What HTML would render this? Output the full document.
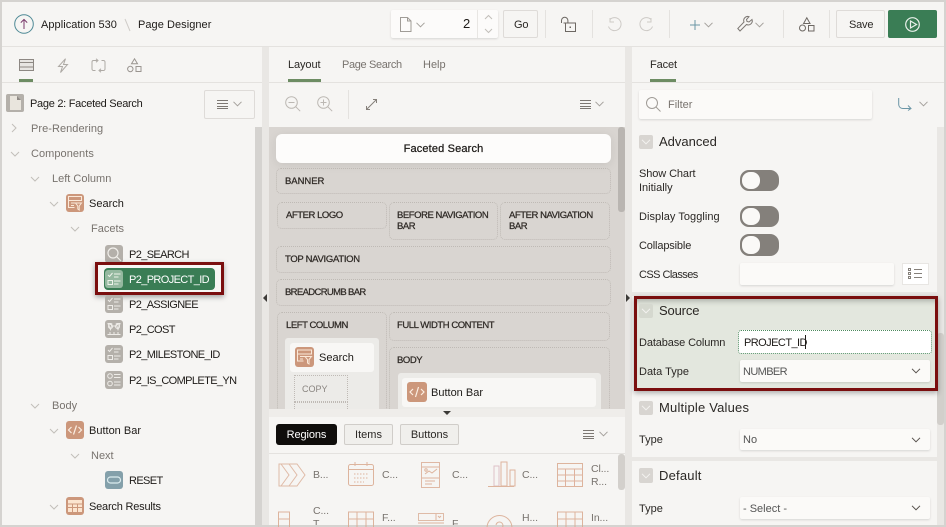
<!DOCTYPE html>
<html><head><meta charset="utf-8"><style>
html,body{margin:0;padding:0;background:#d5d3d0}
#p{position:relative;width:946px;height:527px;overflow:hidden;background:#d5d3d0;font-family:"Liberation Sans",sans-serif;font-size:11px;color:#2b2825}
#p div,#p span,#p svg{position:absolute;display:block}
.t{white-space:nowrap;line-height:14px;height:14px;margin-top:1px}
.g{color:#78736e}
.b{color:#1e1b18}
.u{letter-spacing:-.62px}
.r{font-size:9.5px;color:#2f2a26;-webkit-text-stroke:.25px #2f2a26;line-height:12px;white-space:pre;margin-top:1px;letter-spacing:-.45px}
.z{border:1px dotted #bfbab5;border-radius:5px;box-sizing:border-box}
.ib{background:#b4b0aa;border-radius:3px;width:18px;height:18px;left:105px}
.or{background:#cc977b;border-radius:3px}
.sel{background:#fbfaf8;border-radius:2px;box-shadow:0 1px 2px rgba(0,0,0,.13)}
.tg{left:740px;width:39px;height:21px;background:#84807b;border-radius:9px}
.tg i{position:absolute;display:block;left:2px;top:2px;width:18px;height:17px;border-radius:8px;background:#faf9f7}
.ck{left:639px;width:14px;height:14px;background:#d8d5d1;border-radius:2px}
.h{font-size:13px;color:#2b2825}
.f{font-size:10.5px;letter-spacing:-.1px}
svg{overflow:visible}
.s{fill:none;stroke:#a5a19c;stroke-width:1}
</style></head><body><div id="p">

<!-- base panels -->
<div style="left:2px;top:2px;width:942px;height:44px;background:#f6f5f3"></div>
<div style="left:2px;top:46px;width:942px;height:1px;background:#e4e2df"></div>
<div style="left:2px;top:47px;width:942px;height:478px;background:#e9e7e4"></div>
<div style="left:2px;top:47px;width:253px;height:478px;background:#f6f5f3"></div>
<div style="left:255px;top:47px;width:7px;height:80px;background:#f6f5f3"></div>
<div style="left:255px;top:127px;width:7px;height:398px;background:#d5d3d0"></div>
<div style="left:2px;top:82px;width:260px;height:1px;background:#e4e2df"></div>
<div style="left:269px;top:47px;width:356px;height:80px;background:#f6f5f3"></div>
<div style="left:269px;top:82px;width:356px;height:1px;background:#e4e2df"></div>
<div style="left:632px;top:47px;width:312px;height:80px;background:#f6f5f3"></div>
<div style="left:632px;top:82px;width:312px;height:1px;background:#e4e2df"></div>

<!-- header -->
<svg style="left:14px;top:14px" width="20" height="20"><circle cx="10" cy="10" r="9.3" fill="none" stroke="#4f8a96" stroke-width="1"/><path d="M10 15V5.500M6.800 8.600L10 5.400l3.200 3.200" fill="none" stroke="#7a3a6b" stroke-width="1"/></svg>
<span class="t b" style="left:41px;top:17px;letter-spacing:.05px">Application 530</span>
<svg style="left:124px;top:18px" width="8" height="14"><path d="M1 1l5 12" stroke="#cfccc8" fill="none"/></svg>
<span class="t b" style="left:138px;top:17px;letter-spacing:.05px">Page Designer</span>

<!-- toolbar -->
<div class="sel" style="left:391px;top:10px;width:107px;height:28px;background:#fcfbfa"></div>
<svg style="left:400px;top:17px" width="12" height="15"><path d="M.5.500h7l3.500 3.500v10.500H.5z M7.500.500v3.500h3.500" fill="none" stroke="#a09c97"/></svg>
<svg style="left:416px;top:22px" width="9" height="6"><path d="M.5.800l4 4 4-4" class="s"/></svg>
<span class="t b" style="left:463px;top:16px;font-size:13px">2</span>
<div style="left:477px;top:10px;width:1px;height:28px;background:#e8e6e3"></div>
<svg style="left:484px;top:14px" width="9" height="20"><path d="M1 5l3.500-3.500L8 5M1 15l3.500 3.500L8 15" fill="none" stroke="#c2bfba"/></svg>
<div style="left:503px;top:10px;width:35px;height:28px;box-sizing:border-box;border:1px solid #dedbd8;border-radius:2px"></div>
<span class="t" style="left:514px;top:17px;letter-spacing:-.2px">Go</span>
<div style="left:545px;top:10px;width:1px;height:28px;background:#e4e2df"></div>
<svg style="left:560px;top:16px" width="17" height="16"><path d="M1.500 7V4.500a3.200 3.200 0 0 1 6.400 0V7M3.500 7h12v8.500h-10V7" fill="none" stroke="#6d6863"/><rect x="9.500" y="10.500" width="1.500" height="1.500" fill="#6d6863"/></svg>
<div style="left:592px;top:10px;width:1px;height:28px;background:#e4e2df"></div>
<svg style="left:607px;top:17px" width="15" height="15"><path d="M3 2.500a6.500 6.500 0 1 1-1.500 7M3 1v4h4" fill="none" stroke="#cdcac6"/></svg>
<svg style="left:639px;top:17px" width="15" height="15"><path d="M12 2.500a6.500 6.500 0 1 0 1.500 7M12 1v4H8" fill="none" stroke="#cdcac6"/></svg>
<div style="left:669px;top:10px;width:1px;height:28px;background:#e4e2df"></div>
<svg style="left:690px;top:20px" width="10" height="10"><path d="M5 0v10M0 5h10" stroke="#6b96a6" fill="none"/></svg>
<svg style="left:704px;top:22px" width="9" height="6"><path d="M.5.800l4 4 4-4" class="s"/></svg>
<svg style="left:737px;top:16px" width="16" height="16"><path d="M15 3.500l-3 2.500-2-.5-.5-2L12 .7A4 4 0 0 0 7 6L.8 12.500 3 15l6.500-6.500A4 4 0 0 0 15 3.500z" fill="none" stroke="#7d7873"/></svg>
<svg style="left:755px;top:22px" width="9" height="6"><path d="M.5.800l4 4 4-4" class="s"/></svg>
<div style="left:783px;top:10px;width:1px;height:28px;background:#e4e2df"></div>
<svg style="left:799px;top:17px" width="16" height="15"><path d="M7.800.8l3.200 5.700H4.600z" fill="none" stroke="#6d6863"/><circle cx="3.500" cy="11" r="3" fill="none" stroke="#6d6863"/><rect x="9.500" y="8.500" width="5.500" height="5.500" fill="none" stroke="#6d6863"/></svg>
<div style="left:829px;top:10px;width:1px;height:28px;background:#e4e2df"></div>
<div style="left:836px;top:10px;width:49px;height:28px;box-sizing:border-box;border:1px solid #dedbd8;border-radius:2px"></div>
<span class="t" style="left:849px;top:17px;letter-spacing:-.2px">Save</span>
<div style="left:888px;top:10px;width:49px;height:28px;background:#3a7d55;border-radius:2px"></div>
<svg style="left:905px;top:17px" width="15" height="15"><circle cx="7.500" cy="7.500" r="6.800" fill="none" stroke="#e8f0ea" stroke-width="1.200"/><path d="M5.500 4l6 3.500-6 3.500z" fill="none" stroke="#e8f0ea" stroke-width="1.200"/></svg>

<!-- left tabs -->
<svg style="left:19px;top:59px" width="15" height="13"><rect x=".5" y=".5" width="14" height="11" fill="#e7e5e2" stroke="#8d8883"/><path d="M1 3.500h13M1 8h13" stroke="#8d8883"/></svg>
<div style="left:19px;top:79px;width:14px;height:3px;background:#6d8c63"></div>
<svg style="left:57px;top:58px" width="12" height="15"><path d="M8.500.7L1.500 8.500h4L3.500 14.500l7-8h-4z" fill="none" stroke="#aeaaa5"/></svg>
<svg style="left:91px;top:58px" width="15" height="15"><path d="M6 2.500H2.500a1.500 1.500 0 0 0-1.500 1.500v7a1.500 1.500 0 0 0 1.500 1.500h2M9 12.500h3.500a1.500 1.500 0 0 0 1.500-1.500V4a1.500 1.500 0 0 0-1.500-1.500h-2M5 .7l2 1.800-2 1.800M10 10.700l-2 1.800 2 1.800" fill="none" stroke="#aeaaa5"/></svg>
<svg style="left:127px;top:58px" width="15" height="15"><path d="M7.500.8l3 5H4.500z" fill="none" stroke="#9a9590"/><circle cx="3.300" cy="11" r="2.700" fill="none" stroke="#9a9590"/><rect x="9" y="8.500" width="5" height="5" fill="none" stroke="#9a9590"/></svg>

<!-- middle tabs -->
<span class="t" style="left:288px;top:57px;letter-spacing:-.1px">Layout</span>
<div style="left:288px;top:79px;width:33px;height:3px;background:#6d8c63"></div>
<span class="t g" style="left:342px;top:57px;letter-spacing:-.35px">Page Search</span>
<span class="t g" style="left:423px;top:57px">Help</span>

<!-- right tab -->
<span class="t" style="left:650px;top:57px;letter-spacing:-.1px">Facet</span>
<div style="left:650px;top:79px;width:26px;height:3px;background:#6d8c63"></div>

<!-- tree head -->
<div style="left:6px;top:94px;width:18px;height:18px;background:#b4b0aa;border-radius:2px"></div>
<svg style="left:10px;top:96px" width="11" height="14"><path d="M0 0h7l4 4v10H0z" fill="#e9e5dd"/><path d="M7 0l4 4H7z" fill="#8f8a85"/></svg>
<span class="t b" style="left:30px;top:96px;letter-spacing:-.28px">Page 2: Faceted Search</span>
<div style="left:204px;top:90px;width:51px;height:29px;box-sizing:border-box;border:1px solid #dedbd8;border-radius:2px"></div>
<svg style="left:217px;top:100px" width="11" height="9"><path d="M0 .5h11M0 3.500h11M0 6.500h11M0 8.500h11" stroke="#7d7873"/></svg>
<svg style="left:233px;top:101px" width="9" height="6"><path d="M.5.800l4 4 4-4" class="s"/></svg>

<!-- tree chevrons -->
<svg style="left:0;top:0" width="110" height="527"><g fill="none" stroke="#c2beb9">
<path d="M12 124l4 4-4 4"/>
<path d="M11 152l4 4 4-4"/>
<path d="M31 177l4 4 4-4"/>
<path d="M50 202l4 4 4-4"/>
<path d="M71 227l4 4 4-4"/>
<path d="M31 404l4 4 4-4"/>
<path d="M50 429l4 4 4-4"/>
<path d="M71 454l4 4 4-4"/>
<path d="M50 505l4 4 4-4"/>
</g></svg>

<!-- tree text -->
<span class="t g" style="left:31px;top:121px;letter-spacing:.05px">Pre-Rendering</span>
<span class="t g" style="left:31px;top:146px;letter-spacing:.05px">Components</span>
<span class="t g" style="left:52px;top:171px;letter-spacing:0">Left Column</span>
<div class="or" style="left:66px;top:194px;width:18px;height:18px"></div>
<svg style="left:66px;top:194px" width="18" height="18"><g fill="none" stroke="#fae8d8"><path d="M2.500 2.500h13v4h-13zM2.500 2.500v11h6M5 9h5M5 11.500h3"/><path d="M9.500 9h6l-2.300 3v4l-1.400-1v-3z"/></g></svg>
<span class="t b" style="left:89px;top:196px">Search</span>
<span class="t g" style="left:91px;top:221px">Facets</span>

<div class="ib" style="top:245px"></div>
<svg style="left:105px;top:245px" width="18" height="18"><circle cx="8" cy="8" r="5" fill="none" stroke="#f1efeb" stroke-width="1.200"/><path d="M11.500 11.500l4.500 4.500" stroke="#f1efeb" stroke-width="1.200"/></svg>
<span class="t b u" style="left:129px;top:247px">P2_SEARCH</span>

<!-- highlight -->
<div style="left:95px;top:262px;width:129px;height:33px;box-sizing:border-box;border:3px solid #7a0e0e;box-shadow:0 2px 5px rgba(0,0,0,.35);background:#f6f5f3"></div>
<div style="left:104px;top:268px;width:111px;height:22px;background:#3a7d55;border-radius:4px"></div>
<div style="left:105px;top:270px;width:18px;height:18px;background:#94b89f;border-radius:3px"></div>
<svg style="left:105px;top:270px" width="18" height="18"><g fill="none" stroke="#eef3ea"><path d="M3 5l1.500 1.500L7.500 3M9 4h6.500M9 7h4.500"/><rect x="3" y="10.500" width="4.500" height="4"/><path d="M9 11h6.500M9 14h4.500"/></g></svg>
<span class="t u" style="left:129px;top:272px;color:#fff">P2_PROJECT_ID</span>

<div class="ib" style="top:295px"></div>
<svg style="left:105px;top:295px" width="18" height="18"><g fill="none" stroke="#eeece8"><path d="M3 5l1.500 1.500L7.500 3M9 4h6.500M9 7h4.500"/><rect x="3" y="10.500" width="4.500" height="4"/><path d="M9 11h6.500M9 14h4.500"/></g></svg>
<span class="t b u" style="left:129px;top:297px">P2_ASSIGNEE</span>

<div class="ib" style="top:320px"></div>
<svg style="left:105px;top:320px" width="18" height="18"><g fill="none" stroke="#eeece8"><path d="M2.500 3.500h4M11.500 3.500h4M3 3.500l2.500 6 1.500-6M11 3.500l2 6 2-6"/><circle cx="5.500" cy="6.500" r="2"/><circle cx="12.500" cy="6.500" r="2"/><path d="M7 6h4M2.500 14.500h13M5 12v2.500M9 12v2.500M13 12v2.500"/></g></svg>
<span class="t b u" style="left:129px;top:322px">P2_COST</span>

<div class="ib" style="top:345px"></div>
<svg style="left:105px;top:345px" width="18" height="18"><g fill="none" stroke="#eeece8"><path d="M3 5l1.500 1.500L7.500 3M9 4h6.500M9 7h4.500"/><rect x="3" y="10.500" width="4.500" height="4"/><path d="M9 11h6.500M9 14h4.500"/></g></svg>
<span class="t b u" style="left:129px;top:347px">P2_MILESTONE_ID</span>

<div class="ib" style="top:371px"></div>
<svg style="left:105px;top:371px" width="18" height="18"><g fill="none" stroke="#eeece8"><circle cx="5" cy="5" r="2.300"/><circle cx="5" cy="12.500" r="2.300"/><path d="M9 3.500h6.500M9 6.500h6.500M9 11h6.500M9 14h6.500"/></g></svg>
<span class="t b u" style="left:129px;top:373px">P2_IS_COMPLETE_YN</span>

<span class="t g" style="left:52px;top:398px">Body</span>
<div class="or" style="left:66px;top:421px;width:18px;height:18px"></div>
<svg style="left:66px;top:421px" width="18" height="18"><path d="M5.500 6l-3 3 3 3M12.500 6l3 3-3 3M10.500 4.500l-3 9" fill="none" stroke="#fbeee2" stroke-width="1.200"/></svg>
<span class="t b" style="left:89px;top:423px">Button Bar</span>
<span class="t g" style="left:91px;top:448px">Next</span>
<div class="ib" style="top:471px;background:#84a0aa"></div>
<svg style="left:105px;top:471px" width="18" height="18"><rect x="2.500" y="6" width="13" height="6" rx="3" fill="none" stroke="#dcecef" stroke-width="1.200"/></svg>
<span class="t b u" style="left:129px;top:473px">RESET</span>
<div class="or" style="left:66px;top:497px;width:18px;height:18px"></div>
<svg style="left:66px;top:497px" width="18" height="18"><rect x="2" y="3" width="14" height="12" fill="#fbe4cf"/><path d="M2 7h14M2 10.500h14M6.500 7v8M11.500 7v8" stroke="#cc977b" fill="none"/></svg>
<span class="t b" style="left:89px;top:499px;letter-spacing:-.2px">Search Results</span>

<!-- splitter arrows -->
<svg style="left:263px;top:294px" width="5" height="9"><path d="M4 0v8L0 4z" fill="#3c3a37"/></svg>
<svg style="left:626px;top:294px" width="5" height="9"><path d="M0 0v8l4-4z" fill="#3c3a37"/></svg>

<!-- middle toolbar -->
<svg style="left:285px;top:96px" width="16" height="16"><circle cx="6.500" cy="6.500" r="5.800" fill="none" stroke="#bcb8b3"/><path d="M3.500 6.500h6M10.700 10.700l4.500 4.500" stroke="#bcb8b3" fill="none"/></svg>
<svg style="left:317px;top:96px" width="16" height="16"><circle cx="6.500" cy="6.500" r="5.800" fill="none" stroke="#bcb8b3"/><path d="M3.500 6.500h6M6.500 3.500v6M10.700 10.700l4.500 4.500" stroke="#bcb8b3" fill="none"/></svg>
<div style="left:348px;top:90px;width:1px;height:29px;background:#e4e2df"></div>
<svg style="left:365px;top:98px" width="13" height="13"><path d="M2 11L11 2M8 1.500h3.500V5M1.500 8v3.500H5" fill="none" stroke="#85807a"/></svg>
<svg style="left:580px;top:100px" width="11" height="9"><path d="M0 .5h11M0 3.500h11M0 6.500h11M0 8.500h11" stroke="#7d7873"/></svg>
<svg style="left:595px;top:101px" width="9" height="6"><path d="M.5.800l4 4 4-4" class="s"/></svg>

<!-- canvas -->
<div style="left:269px;top:127px;width:356px;height:282px;background:#d9d5d1;overflow:hidden"></div>
<div style="left:618px;top:127px;width:7px;height:85px;background:#b9b5b1;border-radius:3px"></div>
<div style="left:276px;top:134px;width:335px;height:29px;background:#fdfcfb;border-radius:6px;box-shadow:0 2px 10px rgba(0,0,0,.08)"></div>
<span class="t b" style="left:276px;width:335px;text-align:center;top:141px;-webkit-text-stroke:.25px #1e1b18;letter-spacing:.15px">Faceted Search</span>
<div class="z" style="left:276px;top:168px;width:335px;height:26px"></div>
<span class="r" style="left:285px;top:175px;letter-spacing:-.05px">BANNER</span>
<div class="z" style="left:277px;top:202px;width:110px;height:27px"></div>
<span class="r" style="left:286px;top:209px">AFTER LOGO</span>
<div class="z" style="left:389px;top:202px;width:109px;height:38px"></div>
<span class="r" style="left:397px;top:209px;line-height:11px">BEFORE NAVIGATION
BAR</span>
<div class="z" style="left:500px;top:202px;width:110px;height:38px"></div>
<span class="r" style="left:509px;top:209px;line-height:11px">AFTER NAVIGATION
BAR</span>
<div class="z" style="left:276px;top:246px;width:335px;height:27px"></div>
<span class="r" style="left:285px;top:253px;letter-spacing:-.3px">TOP NAVIGATION</span>
<div class="z" style="left:276px;top:279px;width:335px;height:27px"></div>
<span class="r" style="left:285px;top:286px;letter-spacing:-.65px">BREADCRUMB BAR</span>
<div class="z" style="left:277px;top:312px;width:110px;height:110px;clip-path:inset(0 0 13px 0)"></div>
<span class="r" style="left:286px;top:319px">LEFT COLUMN</span>
<div class="z" style="left:389px;top:312px;width:221px;height:29px"></div>
<span class="r" style="left:397px;top:319px">FULL WIDTH CONTENT</span>
<div class="z" style="left:389px;top:347px;width:221px;height:80px;clip-path:inset(0 0 18px 0)"></div>
<span class="r" style="left:397px;top:354px">BODY</span>

<div style="left:285px;top:338px;width:94px;height:71px;background:#ecebe8;border-radius:3px 3px 0 0"></div>
<div style="left:290px;top:343px;width:84px;height:29px;background:#f8f7f5;border-radius:3px"></div>
<div class="or" style="left:295px;top:347px;width:19px;height:20px"></div>
<svg style="left:295px;top:347px" width="19" height="20"><g fill="none" stroke="#fae8d8"><path d="M2.500 3h14v4h-14zM2.500 3v11h6M5 9.500h5M5 12h3"/><path d="M10 9.500h6.500l-2.500 3v4.500l-1.500-1v-3.500z"/></g></svg>
<span class="t b" style="left:319px;top:350px">Search</span>
<div class="z" style="left:294px;top:375px;width:54px;height:27px;border-radius:0"></div>
<span class="r" style="left:302px;top:382px;-webkit-text-stroke:0;font-size:9px;color:#8a8580;letter-spacing:0">COPY</span>
<div class="z" style="left:294px;top:402px;width:54px;height:7px;border-radius:0;border-bottom:0"></div>

<div style="left:398px;top:373px;width:203px;height:36px;background:#ecebe8;border-radius:3px 3px 0 0"></div>
<div style="left:402px;top:378px;width:194px;height:29px;background:#f8f7f5;border-radius:3px"></div>
<div class="or" style="left:407px;top:382px;width:20px;height:20px"></div>
<svg style="left:407px;top:382px" width="20" height="20"><path d="M6 7l-3 3 3 3M14 7l3 3-3 3M11.500 5l-3 10" fill="none" stroke="#fbeee2" stroke-width="1.200"/></svg>
<span class="t b" style="left:431px;top:385px">Button Bar</span>

<!-- gallery -->
<div style="left:269px;top:409px;width:356px;height:8px;background:#efedea"></div>
<svg style="left:443px;top:411px" width="8" height="5"><path d="M0 0h8L4 4z" fill="#3c3a37"/></svg>
<div style="left:269px;top:417px;width:356px;height:108px;background:#f6f5f3;overflow:hidden"></div>
<div style="left:276px;top:424px;width:61px;height:21px;background:#0f0d0b;border-radius:3px"></div>
<span class="t" style="left:276px;width:61px;text-align:center;top:427px;color:#fff;letter-spacing:-.1px">Regions</span>
<div style="left:344px;top:424px;width:49px;height:21px;box-sizing:border-box;border:1px solid #d0cdc9;border-radius:2px;background:#f0efec"></div>
<span class="t" style="left:344px;width:49px;text-align:center;top:427px">Items</span>
<div style="left:400px;top:424px;width:59px;height:21px;box-sizing:border-box;border:1px solid #d0cdc9;border-radius:2px;background:#f0efec"></div>
<span class="t" style="left:400px;width:59px;text-align:center;top:427px">Buttons</span>
<svg style="left:583px;top:430px" width="11" height="9"><path d="M0 .5h11M0 3.500h11M0 6.500h11M0 8.500h11" stroke="#7d7873"/></svg>
<svg style="left:599px;top:431px" width="9" height="6"><path d="M.5.800l4 4 4-4" class="s"/></svg>
<div style="left:269px;top:453px;width:356px;height:1px;background:#e4e2df"></div>
<div style="left:618px;top:454px;width:7px;height:36px;background:#d3d0cc;border-radius:3px"></div>

<svg style="left:269px;top:454px;opacity:.85" width="349" height="71"><g fill="none" stroke="#d9a98f">
<path d="M10 10h18l8 11-8 11H10zM20 10l8 11-8 11M12 10l8 11-8 11" stroke="#dcb19a"/>
<rect x="79.500" y="10.500" width="25" height="21" rx="2"/><path d="M80 15.500h25M86 8v4M98 8v4"/>
<path d="M85 20h14M85 24h14M85 28h10" stroke-dasharray="1.500 1.500"/>
<rect x="152.500" y="8.500" width="18" height="25" stroke="#dcae97"/><path d="M153 13h17M153 24h17M156 27h10M156 30h7M156 20l4-3 3 2 5-4"/><circle cx="157" cy="16" r="1.200"/>
<rect x="225" y="12" width="5" height="20" stroke="#d9b8c0"/><rect x="232" y="8" width="6" height="24"/><rect x="241" y="16" width="5" height="16"/><path d="M219 32.500h26"/>
<rect x="288.500" y="9.500" width="25" height="23"/><path d="M289 15h25M289 21h25M289 27h25M296.500 15v18M305.500 15v18" stroke="#dca790"/>
<rect x="9.500" y="58" width="11" height="20"/><path d="M10 65h10"/>
<rect x="79.500" y="58" width="25" height="20"/><path d="M80 65h25M88 58v20M97 58v20"/>
<rect x="149.500" y="59.500" width="25" height="7" stroke="#dcb19a"/><path d="M167 60v6M149 69h26M169 62l1.500 1.500L172 62"/>
<circle cx="230.500" cy="74" r="12.500"/><path d="M227 71a3.500 3.500 0 1 1 4 4"/>
<rect x="288.500" y="58" width="25" height="20"/><path d="M289 65h25M297 58v20M306 58v20"/>
</g></svg>
<span class="t g f" style="left:313px;top:467px">B...</span>
<span class="t g f" style="left:382px;top:467px">C...</span>
<span class="t g f" style="left:452px;top:467px">C...</span>
<span class="t g f" style="left:522px;top:467px">C...</span>
<span class="t g f" style="left:591px;top:461px">Cl...</span>
<span class="t g f" style="left:591px;top:474px">R...</span>
<span class="t g f" style="left:313px;top:503px">C...</span>
<span class="t g f" style="left:313px;top:516px;height:8px;overflow:hidden">T...</span>
<span class="t g f" style="left:382px;top:510px">F...</span>
<span class="t g f" style="left:452px;top:516px;height:8px;overflow:hidden">F...</span>
<span class="t g f" style="left:522px;top:510px">H...</span>
<span class="t g f" style="left:591px;top:510px">In...</span>

<!-- right: filter -->
<div class="sel" style="left:639px;top:90px;width:233px;height:29px"></div>
<svg style="left:646px;top:97px" width="15" height="15"><circle cx="6" cy="6" r="5.500" fill="none" stroke="#a09c97"/><path d="M10 10l4.500 4.500" stroke="#a09c97" fill="none"/></svg>
<span class="t g" style="left:668px;top:97px">Filter</span>
<svg style="left:898px;top:98px" width="14" height="13"><path d="M.7 0v6.500a4 4 0 0 0 4 4H13M10 7.500l3 3-3 2" fill="none" stroke="#6b96a6"/></svg>
<svg style="left:919px;top:101px" width="9" height="6"><path d="M.5.800l4 4 4-4" class="s"/></svg>

<!-- right sections -->
<div style="left:632px;top:127px;width:305px;height:165px;background:#f6f5f3"></div>
<div style="left:632px;top:296px;width:305px;height:161px;background:#f6f5f3"></div>
<div style="left:632px;top:461px;width:305px;height:64px;background:#f6f5f3"></div>
<div style="left:937px;top:333px;width:7px;height:92px;background:#d2cfcb;border-radius:3px"></div>

<div class="ck" style="top:135px"></div>
<svg style="left:641px;top:139px" width="10" height="6"><path d="M1 .8l4 4 4-4" fill="none" stroke="#f4f3f1"/></svg>
<span class="t h" style="left:659px;top:134px;letter-spacing:0">Advanced</span>
<span class="t" style="left:639px;top:166px;letter-spacing:-.1px">Show Chart</span>
<span class="t" style="left:639px;top:180px">Initially</span>
<div class="tg" style="top:170px"><i></i></div>
<span class="t" style="left:639px;top:209px;letter-spacing:.05px">Display Toggling</span>
<div class="tg" style="top:206px"><i></i></div>
<span class="t" style="left:639px;top:238px;letter-spacing:-.15px">Collapsible</span>
<div class="tg" style="top:234px;height:22px"><i style="height:18px"></i></div>
<span class="t" style="left:639px;top:267px;letter-spacing:-.55px">CSS Classes</span>
<div class="sel" style="left:740px;top:263px;width:154px;height:22px"></div>
<div style="left:902px;top:263px;width:27px;height:22px;background:#fff;box-sizing:border-box;border:1px solid #e8e6e3"></div>
<svg style="left:908px;top:268px" width="15" height="12"><g fill="none" stroke="#85807a"><rect x=".5" y=".5" width="2" height="2"/><rect x=".5" y="4.500" width="2" height="2"/><rect x=".5" y="8.500" width="2" height="2"/><path d="M6 1.500h8M6 5.500h8M6 9.500h8"/></g></svg>

<!-- source highlight -->
<div style="left:634px;top:296px;width:304px;height:95px;box-sizing:border-box;border:3px solid #7a0e0e;background:#e3e7de;box-shadow:0 2px 5px rgba(0,0,0,.3), inset 0 6px 6px -4px rgba(0,0,0,.25)"></div>
<div class="ck" style="top:304px;background:#d5d8cf"></div>
<svg style="left:641px;top:308px" width="10" height="6"><path d="M1 .8l4 4 4-4" fill="none" stroke="#f4f3f1"/></svg>
<span class="t h" style="left:659px;top:303px;letter-spacing:-.15px">Source</span>
<span class="t" style="left:639px;top:335px;letter-spacing:-.12px">Database Column</span>
<div style="left:738px;top:330px;width:194px;height:24px;box-sizing:border-box;background:#fff;border:1px dotted #4d8a5e;border-radius:3px"></div>
<span class="t b" style="left:744px;top:335px;letter-spacing:-.55px">PROJECT_ID</span>
<div style="left:805px;top:335px;width:1px;height:14px;background:#1e1b18"></div>
<span class="t" style="left:639px;top:364px">Data Type</span>
<div class="sel" style="left:740px;top:360px;width:190px;height:22px"></div>
<span class="t u" style="left:743px;top:364px;color:#555">NUMBER</span>
<svg style="left:911px;top:368px" width="10" height="6"><path d="M1 .8l4 4 4-4" fill="none" stroke="#55504b"/></svg>

<div class="ck" style="top:401px"></div>
<svg style="left:641px;top:405px" width="10" height="6"><path d="M1 .8l4 4 4-4" fill="none" stroke="#f4f3f1"/></svg>
<span class="t h" style="left:659px;top:400px;letter-spacing:.2px">Multiple Values</span>
<span class="t" style="left:639px;top:432px">Type</span>
<div class="sel" style="left:740px;top:429px;width:190px;height:21px"></div>
<span class="t" style="left:743px;top:432px;color:#555">No</span>
<svg style="left:911px;top:437px" width="10" height="6"><path d="M1 .8l4 4 4-4" fill="none" stroke="#55504b"/></svg>

<div class="ck" style="top:468px;height:15px"></div>
<svg style="left:641px;top:473px" width="10" height="6"><path d="M1 .8l4 4 4-4" fill="none" stroke="#f4f3f1"/></svg>
<span class="t h" style="left:659px;top:468px;letter-spacing:.2px">Default</span>
<span class="t" style="left:639px;top:501px">Type</span>
<div class="sel" style="left:740px;top:497px;width:190px;height:22px"></div>
<span class="t" style="left:743px;top:501px;color:#555">- Select -</span>
<svg style="left:911px;top:505px" width="10" height="6"><path d="M1 .8l4 4 4-4" fill="none" stroke="#55504b"/></svg>

</div></body></html>
